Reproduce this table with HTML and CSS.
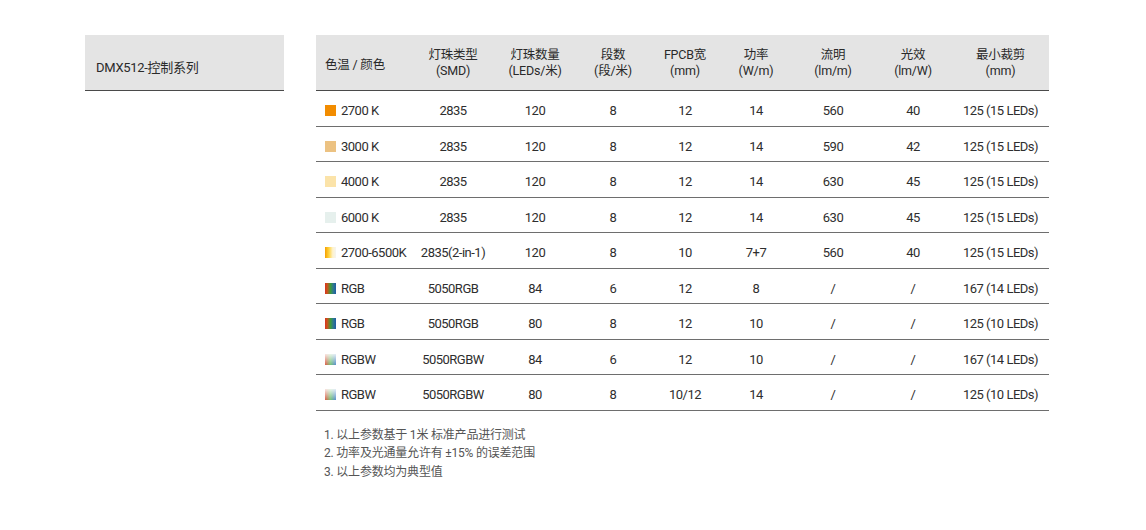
FILE: index.html
```html
<!DOCTYPE html>
<html lang="zh-CN">
<head>
<meta charset="utf-8">
<title>DMX512-控制系列</title>
<link rel="stylesheet" href="styles.css">
</head>
<body>
<div class="page">
  <div class="side">
    <div class="side-title">DMX512-控制系列</div>
  </div>
  <div class="main">
    <table class="spec">
      <colgroup>
        <col class="w1"><col class="w2"><col class="w3"><col class="w4"><col class="w5"><col class="w6"><col class="w7"><col class="w8"><col class="w9">
      </colgroup>
      <thead>
        <tr>
          <th class="first"><span class="th-first">色温 / 颜色</span></th>
          <th>灯珠类型<br>(SMD)</th>
          <th>灯珠数量<br>(LEDs/米)</th>
          <th>段数<br>(段/米)</th>
          <th>FPCB宽<br>(mm)</th>
          <th>功率<br>(W/m)</th>
          <th>流明<br>(lm/m)</th>
          <th>光效<br>(lm/W)</th>
          <th>最小裁剪<br>(mm)</th>
        </tr>
      </thead>
      <tbody>
        <tr><td class="first"><span class="sw k2700"></span>2700 K</td><td>2835</td><td>120</td><td>8</td><td>12</td><td>14</td><td>560</td><td>40</td><td>125 (15 LEDs)</td></tr>
        <tr><td class="first"><span class="sw k3000"></span>3000 K</td><td>2835</td><td>120</td><td>8</td><td>12</td><td>14</td><td>590</td><td>42</td><td>125 (15 LEDs)</td></tr>
        <tr><td class="first"><span class="sw k4000"></span>4000 K</td><td>2835</td><td>120</td><td>8</td><td>12</td><td>14</td><td>630</td><td>45</td><td>125 (15 LEDs)</td></tr>
        <tr><td class="first"><span class="sw k6000"></span>6000 K</td><td>2835</td><td>120</td><td>8</td><td>12</td><td>14</td><td>630</td><td>45</td><td>125 (15 LEDs)</td></tr>
        <tr><td class="first"><span class="sw cct"></span>2700-6500K</td><td>2835(2-in-1)</td><td>120</td><td>8</td><td>10</td><td>7+7</td><td>560</td><td>40</td><td>125 (15 LEDs)</td></tr>
        <tr><td class="first"><span class="sw rgb"></span>RGB</td><td>5050RGB</td><td>84</td><td>6</td><td>12</td><td>8</td><td>/</td><td>/</td><td>167 (14 LEDs)</td></tr>
        <tr><td class="first"><span class="sw rgb"></span>RGB</td><td>5050RGB</td><td>80</td><td>8</td><td>12</td><td>10</td><td>/</td><td>/</td><td>125 (10 LEDs)</td></tr>
        <tr><td class="first"><span class="sw rgbw"></span>RGBW</td><td>5050RGBW</td><td>84</td><td>6</td><td>12</td><td>10</td><td>/</td><td>/</td><td>167 (14 LEDs)</td></tr>
        <tr><td class="first"><span class="sw rgbw"></span>RGBW</td><td>5050RGBW</td><td>80</td><td>8</td><td>10/12</td><td>14</td><td>/</td><td>/</td><td>125 (10 LEDs)</td></tr>
      </tbody>
    </table>
    <ol class="notes">
      <li>1. 以上参数基于 1米 标准产品进行测试</li>
      <li>2. 功率及光通量允许有 ±15% 的误差范围</li>
      <li>3. 以上参数均为典型值</li>
    </ol>
  </div>
</div>
</body>
</html>
```

FILE: styles.css
```css
html, body {
  margin: 0;
  padding: 0;
  background: #ffffff;
}
body {
  font-family: Roboto, "Noto Sans CJK SC", sans-serif;
  color: #2e2e2e;
}
.page {
  display: flex;
  align-items: flex-start;
  gap: 32px;
  padding: 35px 0 0 85px;
}
.side {
  width: 188px;
  height: 55px;
  background: #e4e4e4;
  border-bottom: 1px solid #4a4a4a;
  display: flex;
  align-items: center;
  padding-left: 11px;
}
.side-title {
  font-size: 13px;
  letter-spacing: -0.3px;
  padding-top: 8px;
  color: #2a2a2a;
}
.main {
  width: 733px;
}
.spec {
  width: 733px;
  table-layout: fixed;
  border-collapse: collapse;
  border-spacing: 0;
}
.w1 { width: 96px; }
.w2 { width: 82px; }
.w3 { width: 82px; }
.w4 { width: 74px; }
.w5 { width: 70px; }
.w6 { width: 72px; }
.w7 { width: 82px; }
.w8 { width: 78px; }
.w9 { width: 97px; }
.spec th {
  background: #e4e4e4;
  height: 55px;
  padding: 0;
  font-weight: normal;
  font-size: 12.5px;
  line-height: 16px;
  text-align: center;
  vertical-align: middle;
  border-bottom: 1px solid #4a4a4a;
  color: #2a2a2a;
  letter-spacing: -0.2px;
}
.spec th.first {
  text-align: left;
  padding-left: 9px;
}
.th-first {
  display: inline-block;
  padding-top: 4px;
}
.spec td {
  height: 35.5px;
  padding: 5px 0 0 0;
  box-sizing: border-box;
  text-align: center;
  vertical-align: middle;
  font-size: 13px;
  letter-spacing: -0.5px;
  border-bottom: 1px solid #6e6e6e;
  color: #2e2e2e;
  white-space: nowrap;
}
.spec td.first {
  text-align: left;
  padding-left: 9px;
}
.sw {
  display: inline-block;
  width: 11px;
  height: 11px;
  margin-right: 5px;
  vertical-align: -1px;
}
.k2700 { background: #f28c00; }
.k3000 { background: #ecc282; }
.k4000 { background: #fbe3a9; }
.k6000 { background: #e6f0ed; }
.cct { background: linear-gradient(to right, #f5a000 0%, #ffd23c 35%, #fff3cc 70%, #f4f4f2 100%); }
.rgb { background: linear-gradient(to right, #d9311f 0%, #c9541d 20%, #3f9a3c 50%, #2f7a8c 75%, #1f5aa6 100%); }
.rgbw { background: linear-gradient(to bottom, rgba(255,255,255,0.85) 0%, rgba(255,255,255,0.05) 100%), linear-gradient(to right, #e2503c 0%, #6fbf70 50%, #4f86cf 100%); }
.notes {
  list-style: none;
  margin: 15px 0 0 0;
  padding: 0 0 0 8px;
  font-size: 12px;
  line-height: 18.5px;
  color: #555555;
  letter-spacing: -0.2px;
}
.notes li {
  margin: 0;
}
```
